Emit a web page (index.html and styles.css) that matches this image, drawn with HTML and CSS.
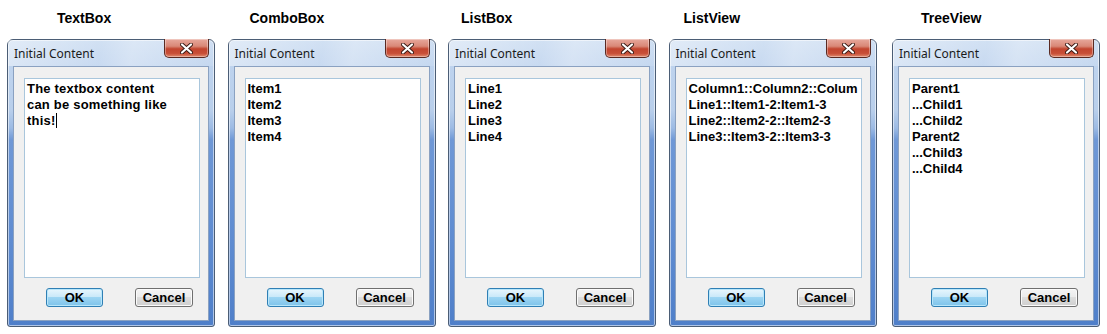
FILE: index.html
```html
<!DOCTYPE html>
<html>
<head>
<meta charset="utf-8">
<link rel="stylesheet" href="styles.css">
</head>
<body>
<div class="row">
  <div class="col">
    <div class="label lbl-1">TextBox</div>
    <div class="window">
      <div class="titlebar"><span class="title">Initial Content</span>
        <div class="close"><svg width="13" height="11" viewBox="0 0 13 11"><path d="M2 1.5 L11 9.5 M11 1.5 L2 9.5" stroke="#3a1a14" stroke-width="4" stroke-linecap="round"/><path d="M2 1.5 L11 9.5 M11 1.5 L2 9.5" stroke="#fff" stroke-width="2.2" stroke-linecap="round"/></svg></div>
      </div>
      <div class="client">
        <div class="box wide"><div>The textbox content</div><div>can be something like</div><div>this!<span class="caret"></span></div></div>
        <div class="buttons"><div class="btn ok">OK</div><div class="btn cancel">Cancel</div></div>
      </div>
    </div>
  </div>
  <div class="col">
    <div class="label lbl-2">ComboBox</div>
    <div class="window">
      <div class="titlebar"><span class="title">Initial Content</span>
        <div class="close"><svg width="13" height="11" viewBox="0 0 13 11"><path d="M2 1.5 L11 9.5 M11 1.5 L2 9.5" stroke="#3a1a14" stroke-width="4" stroke-linecap="round"/><path d="M2 1.5 L11 9.5 M11 1.5 L2 9.5" stroke="#fff" stroke-width="2.2" stroke-linecap="round"/></svg></div>
      </div>
      <div class="client">
        <div class="box"><div>Item1</div><div>Item2</div><div>Item3</div><div>Item4</div></div>
        <div class="buttons"><div class="btn ok">OK</div><div class="btn cancel">Cancel</div></div>
      </div>
    </div>
  </div>
  <div class="col">
    <div class="label lbl-3">ListBox</div>
    <div class="window">
      <div class="titlebar"><span class="title">Initial Content</span>
        <div class="close"><svg width="13" height="11" viewBox="0 0 13 11"><path d="M2 1.5 L11 9.5 M11 1.5 L2 9.5" stroke="#3a1a14" stroke-width="4" stroke-linecap="round"/><path d="M2 1.5 L11 9.5 M11 1.5 L2 9.5" stroke="#fff" stroke-width="2.2" stroke-linecap="round"/></svg></div>
      </div>
      <div class="client">
        <div class="box"><div>Line1</div><div>Line2</div><div>Line3</div><div>Line4</div></div>
        <div class="buttons"><div class="btn ok">OK</div><div class="btn cancel">Cancel</div></div>
      </div>
    </div>
  </div>
  <div class="col">
    <div class="label lbl-4">ListView</div>
    <div class="window">
      <div class="titlebar"><span class="title">Initial Content</span>
        <div class="close"><svg width="13" height="11" viewBox="0 0 13 11"><path d="M2 1.5 L11 9.5 M11 1.5 L2 9.5" stroke="#3a1a14" stroke-width="4" stroke-linecap="round"/><path d="M2 1.5 L11 9.5 M11 1.5 L2 9.5" stroke="#fff" stroke-width="2.2" stroke-linecap="round"/></svg></div>
      </div>
      <div class="client">
        <div class="box"><div>Column1::Column2::Colum</div><div>Line1::Item1-2:Item1-3</div><div>Line2::Item2-2::Item2-3</div><div>Line3::Item3-2::Item3-3</div></div>
        <div class="buttons"><div class="btn ok">OK</div><div class="btn cancel">Cancel</div></div>
      </div>
    </div>
  </div>
  <div class="col last">
    <div class="label lbl-5">TreeView</div>
    <div class="window">
      <div class="titlebar"><span class="title">Initial Content</span>
        <div class="close"><svg width="13" height="11" viewBox="0 0 13 11"><path d="M2 1.5 L11 9.5 M11 1.5 L2 9.5" stroke="#3a1a14" stroke-width="4" stroke-linecap="round"/><path d="M2 1.5 L11 9.5 M11 1.5 L2 9.5" stroke="#fff" stroke-width="2.2" stroke-linecap="round"/></svg></div>
      </div>
      <div class="client">
        <div class="box"><div>Parent1</div><div>...Child1</div><div>...Child2</div><div>Parent2</div><div>...Child3</div><div>...Child4</div></div>
        <div class="buttons"><div class="btn ok">OK</div><div class="btn cancel">Cancel</div></div>
      </div>
    </div>
  </div>
</div>
</body>
</html>
```
FILE: styles.css
```css
html, body {
  margin: 0;
  padding: 0;
  background: #ffffff;
}
.row {
  display: flex;
  gap: 12.5px;
  padding-left: 7px;
  padding-top: 10px;
}
.col {
  width: 208px;
  display: flex;
  flex-direction: column;
}
.col.last {
  margin-left: 3px;
}
.label {
  font-family: "Liberation Sans", Arial, sans-serif;
  font-weight: bold;
  font-size: 14px;
  line-height: 16px;
  height: 16px;
  margin-bottom: 13px;
  color: #000;
}
.lbl-1 { margin-left: 50px; }
.lbl-2 { margin-left: 22px; }
.lbl-3 { margin-left: 13px; }
.lbl-4 { margin-left: 15px; }
.lbl-5 { margin-left: 29px; }

.window {
  position: relative;
  box-sizing: border-box;
  width: 208px;
  height: 288px;
  border: 1px solid #4b5d75;
  border-radius: 6px 6px 3px 3px;
  padding: 0 5px 5px 5px;
  display: flex;
  flex-direction: column;
  background: linear-gradient(to bottom, #c9dbf1 0px, #bed3ee 26px, #b9cfeb 70px, #9dbbe4 88px, #6f98d6 100px, #5f8cd1 200px, #4f7fc9 100%);
  box-shadow: inset 0 0 0 1px rgba(255,255,255,0.55);
}
.titlebar {
  position: relative;
  height: 26px;
  display: flex;
  align-items: center;
  background: linear-gradient(100deg, rgba(255,255,255,0.45) 0%, rgba(255,255,255,0.15) 45%, rgba(255,255,255,0.35) 60%, rgba(255,255,255,0.1) 100%);
  margin: 0 -5px;
  padding: 0 5px;
}
.title {
  font-family: "Noto Sans", "Open Sans", sans-serif;
  font-size: 12px;
  color: #1b1b1b;
  padding-left: 1px;
}
.close {
  position: absolute;
  top: -1px;
  right: 5px;
  box-sizing: border-box;
  width: 45px;
  height: 19px;
  border: 1px solid #5a2a22;
  border-top: none;
  border-radius: 0 0 5px 5px;
  background: linear-gradient(to bottom, #e7a89c 0%, #d98877 40%, #c2452f 55%, #c84f38 80%, #e18b6f 100%);
  box-shadow: inset 0 0 0 1px rgba(255,255,255,0.35);
  display: flex;
  align-items: center;
  justify-content: center;
}
.client {
  flex: 1;
  box-sizing: border-box;
  background: #f0f0f0;
  border: 1px solid #8aa1c1;
  display: flex;
  flex-direction: column;
}
.box {
  box-sizing: border-box;
  height: 200px;
  margin: 11px 8px 0 10px;
  background: #ffffff;
  border: 1px solid #a9c6dc;
  padding: 2px 2px;
  overflow: hidden;
  white-space: nowrap;
  font-family: "Liberation Sans", Arial, sans-serif;
  font-weight: bold;
  font-size: 13px;
  line-height: 16px;
  color: #000;
}
.box.wide {
  letter-spacing: 0.2px;
}
.caret {
  display: inline-block;
  width: 1px;
  height: 15px;
  background: #000;
  vertical-align: -3px;
  margin-left: 1px;
}
.buttons {
  display: flex;
  margin-top: 10px;
  padding-left: 32px;
  gap: 32px;
}
.btn {
  box-sizing: border-box;
  height: 19px;
  border-radius: 3px;
  display: flex;
  align-items: center;
  justify-content: center;
  font-family: "Liberation Sans", Arial, sans-serif;
  font-weight: bold;
  font-size: 13px;
  color: #000;
}
.ok {
  width: 57px;
  border: 1px solid #2f7fb4;
  background: linear-gradient(to bottom, #e8f6fd 0%, #cbe9f9 45%, #9dd5f3 50%, #7ec3ea 100%);
  box-shadow: inset 0 0 0 1px #b7e6fb;
}
.cancel {
  width: 58px;
  border: 1px solid #6f6f6f;
  background: linear-gradient(to bottom, #f4f4f4 0%, #ececec 45%, #dddddd 50%, #cfcfcf 100%);
  box-shadow: inset 0 0 0 1px #fbfbfb;
}
```
